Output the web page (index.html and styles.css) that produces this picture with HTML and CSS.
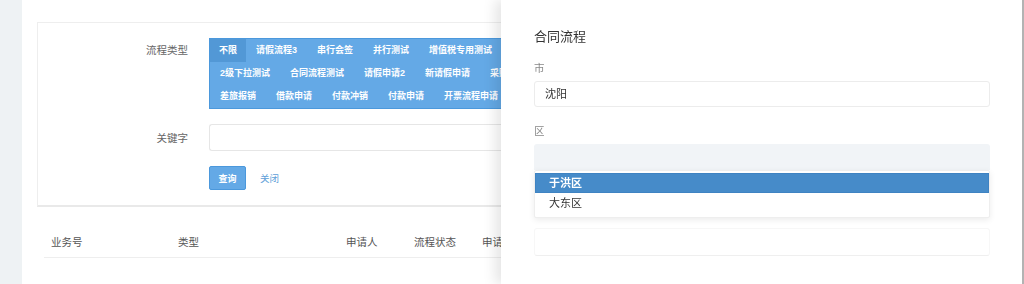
FILE: index.html
```html
<!DOCTYPE html>
<html lang="zh-CN">

<head>
    <meta charset="UTF-8">
    <title>流程查询</title>
    <link rel="stylesheet" href="styles.css">
</head>

<body>
    <div class="layout">
        <div class="gutter"></div>
        <div class="main">
            <!-- 查询条件 -->
            <div class="search-card">
                <div class="form-row">
                    <div class="form-label tall">流程类型</div>
                    <div class="tag-box">
                        <div class="tag-row">
                            <span class="tag active">不限</span>
                            <span class="tag">请假流程3</span>
                            <span class="tag">串行会签</span>
                            <span class="tag">并行测试</span>
                            <span class="tag">增值税专用测试</span>
                        </div>
                        <div class="tag-row">
                            <span class="tag">2级下拉测试</span>
                            <span class="tag">合同流程测试</span>
                            <span class="tag">请假申请2</span>
                            <span class="tag">新请假申请</span>
                            <span class="tag">采购申请</span>
                        </div>
                        <div class="tag-row">
                            <span class="tag">差旅报销</span>
                            <span class="tag">借款申请</span>
                            <span class="tag">付款冲销</span>
                            <span class="tag">付款申请</span>
                            <span class="tag">开票流程申请</span>
                        </div>
                    </div>
                </div>
                <div class="form-row">
                    <div class="form-label">关键字</div>
                    <input type="text" class="keyword-input">
                </div>
                <div class="form-row">
                    <div class="form-label"></div>
                    <div class="actions">
                        <button class="btn-primary">查询</button>
                        <a class="link" href="#">关闭</a>
                    </div>
                </div>
            </div>

            <!-- 列表表头 -->
            <div class="table-head">
                <div>业务号</div>
                <div>类型</div>
                <div>申请人</div>
                <div>流程状态</div>
                <div class="clip">申请</div>
            </div>
        </div>
    </div>

    <!-- 右侧抽屉 -->
    <div class="drawer">
        <div class="drawer-title">合同流程</div>
        <div class="field-label">市</div>
        <div class="field-input">沈阳</div>
        <div class="field-label gap">区</div>
        <div class="select-wrap">
            <div class="field-select"></div>
            <ul class="dropdown">
                <li class="selected">于洪区</li>
                <li>大东区</li>
            </ul>
        </div>
        <div class="field-blank"></div>
    </div>
</body>

</html>
```

FILE: styles.css
```css
body {
    margin: 0;
    font-family: "Liberation Sans", "Noto Sans CJK SC", sans-serif;
    background-color: #fff;
    color: #333;
    overflow: hidden;
}

.layout {
    display: flex;
    height: 284px;
}

.gutter {
    width: 22px;
    flex-shrink: 0;
    background-color: #eef2f4;
}

.main {
    flex: 1;
    padding: 22px 0 0 15px;
}

.search-card {
    border: 1px solid #eeeeee;
    border-bottom: 2px solid #e9e9e9;
    padding: 15px 0 15px 0;
}

.form-row {
    display: flex;
    align-items: center;
    margin-bottom: 15px;
}

.form-row:last-child {
    margin-bottom: 0;
}

.form-row:first-child {
    align-items: flex-start;
}

.form-label {
    width: 150px;
    margin-right: 21px;
    text-align: right;
    font-size: 10.5px;
    color: #666;
}

.form-label.tall {
    line-height: 25px;
}

.tag-box {
    width: 300px;
    overflow: hidden;
    background-color: #64a9e6;
    border: 1px solid #4b98dc;
    border-right: none;
}

.tag-row {
    display: flex;
    white-space: nowrap;
}

.tag {
    height: 23px;
    line-height: 23px;
    padding: 0 10px;
    font-size: 9px;
    font-weight: bold;
    color: #fff;
}

.tag.active {
    background-color: #5298d6;
    padding: 0 9px;
}

.keyword-input {
    width: 300px;
    height: 27px;
    box-sizing: border-box;
    border: 1px solid #e6e6e6;
    border-right: none;
    border-radius: 3px 0 0 3px;
    margin: 0;
}

.actions {
    display: flex;
    align-items: center;
}

.btn-primary {
    width: 37px;
    height: 24px;
    padding: 0;
    background-color: #64a9e6;
    border: 1px solid #4b98dc;
    border-radius: 2px;
    color: #fff;
    font-size: 9px;
    font-weight: bold;
    font-family: inherit;
}

.link {
    margin-left: 14px;
    font-size: 9.5px;
    color: #5d9ed8;
    text-decoration: none;
}

.table-head {
    display: grid;
    grid-template-columns: 127px 168px 68px 68px 1fr;
    margin: 22px 0 0 7px;
    padding-left: 7px;
    height: 28px;
    line-height: 27px;
    border-bottom: 1px solid #eeeeee;
    font-size: 10.5px;
    color: #555;
}

.drawer {
    position: fixed;
    top: 0;
    left: 501px;
    right: 0;
    bottom: 0;
    background-color: #fff;
    box-shadow: -6px 0 12px rgba(0, 0, 0, 0.1);
    border-right: 2px solid #b3b3b3;
    padding: 27px 32px 0 33px;
}

.drawer-title {
    font-size: 13px;
    line-height: 20px;
    color: #333;
    margin-bottom: 13px;
}

.field-label {
    font-size: 10.5px;
    line-height: 16px;
    color: #888;
    margin-bottom: 5px;
}

.field-label.gap {
    margin-top: 16px;
}

.field-input {
    height: 26px;
    line-height: 24px;
    box-sizing: border-box;
    border: 1px solid #ececec;
    border-radius: 3px;
    padding-left: 10px;
    font-size: 11px;
    color: #333;
}

.select-wrap {
    position: relative;
}

.field-select {
    height: 26px;
    background-color: #f1f4f7;
    border-radius: 3px 3px 0 0;
}

.dropdown {
    position: absolute;
    top: 26px;
    left: 0;
    right: 0;
    margin: 0;
    padding: 2px 0 4px 0;
    list-style: none;
    background-color: #fff;
    border: 1px solid #eeeeee;
    border-radius: 2px;
    box-shadow: 0 2px 6px rgba(0, 0, 0, 0.08);
}

.dropdown li {
    height: 20px;
    line-height: 20px;
    padding-left: 14px;
    font-size: 11px;
    color: #333;
}

.dropdown li.selected {
    background-color: #468bc9;
    border: 1px solid #3f83c2;
    height: 18px;
    line-height: 18px;
    padding-left: 13px;
    color: #fff;
    font-weight: bold;
}

.field-blank {
    margin-top: 58px;
    height: 28px;
    box-sizing: border-box;
    border: 1px solid #f7f7f7;
    border-bottom-color: #efefef;
    border-radius: 3px;
}
```
